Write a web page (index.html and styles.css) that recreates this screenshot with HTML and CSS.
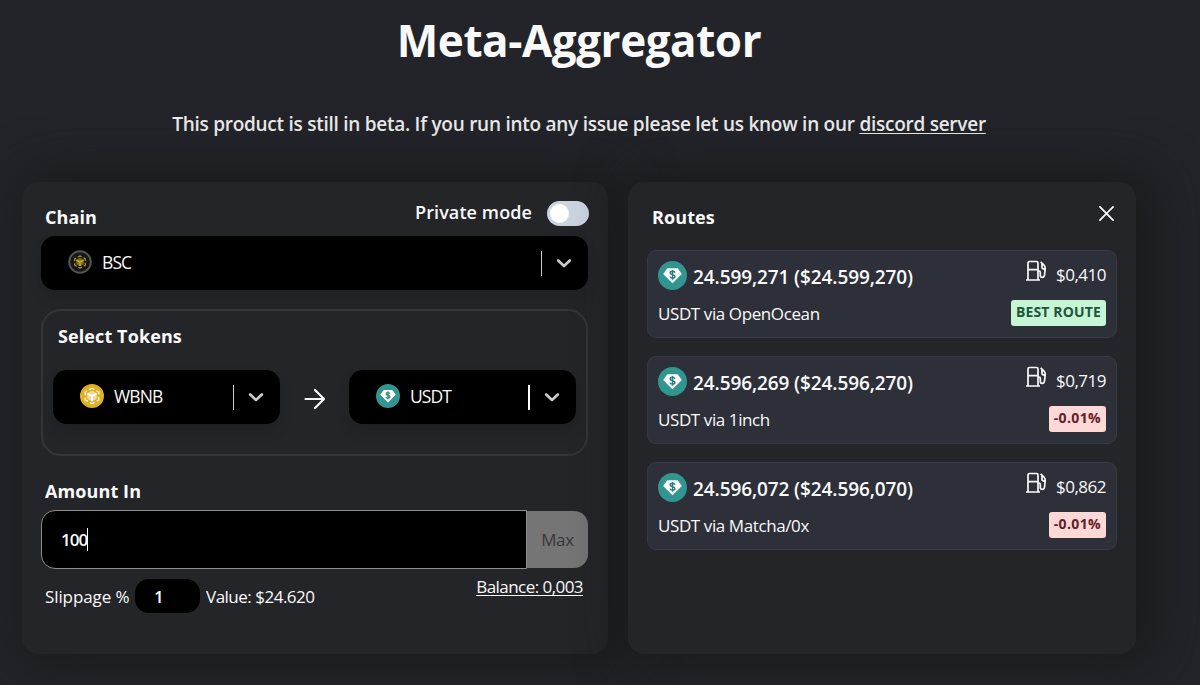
FILE: index.html
```html
<!DOCTYPE html>
<html lang="en">
<head>
    <meta charset="UTF-8">
    <meta name="viewport" content="width=device-width, initial-scale=1.0">
    <title>Meta-Aggregator</title>
    <link rel="stylesheet" href="styles.css">
</head>
<body>
    <!-- shared icons -->
    <svg class="sprite" width="0" height="0">
        <symbol id="chevron" viewBox="0 0 20 20">
            <path d="M4.200 7.500 10 13l5.800-5.500" fill="none" stroke="currentColor" stroke-width="2.600" stroke-linecap="round" stroke-linejoin="round"/>
        </symbol>
        <symbol id="tether" viewBox="0 0 28 28">
            <circle cx="14" cy="14" r="14" fill="#319590"/>
            <path d="M9 7h10l4 5.500L14 21.500l-9-9z" fill="#fff"/>
            <path d="M16.300 11.300c-.3-1-1.100-1.400-2.300-1.400-1.400 0-2.300.6-2.300 1.600 0 2.300 4.700 1.100 4.700 3.400 0 1.100-1 1.700-2.400 1.700-1.300 0-2.200-.5-2.500-1.500M14 8.600v9.400" fill="none" stroke="#2a7f7b" stroke-width="1.400"/>
        </symbol>
        <symbol id="cube" viewBox="0 0 24 24">
            <path d="M12 4.200 18.700 8v8L12 19.800 5.300 16V8z" fill="none" stroke="currentColor" stroke-width="1.300" stroke-dasharray="5.200 2.500" stroke-dashoffset="2.600"/>
            <path d="M12 6.700 16.800 9.300v5.400L12 17.400l-4.800-2.700V9.300z" fill="currentColor" fill-opacity=".55"/>
            <path d="m7.500 9.700 4.500 2.500 4.500-2.500M12 12.200v5" fill="none" stroke="currentColor" stroke-width="1.900"/>
        </symbol>
        <symbol id="gas" viewBox="0 0 22 22">
            <g fill="none" stroke="currentColor" stroke-width="1.700" stroke-linejoin="round">
                <path d="M3 20V3q0-1.500 1.500-1.500h7Q13 1.500 13 3v17M3 9.700h10M1 20h14"/>
                <path d="M13 11h1q1.300 0 1.300 1.500v3.200q0 1.600 1.900 1.600 2.100 0 2.300-2.300l.7-6.200q.2-2.600-1.400-3.900L15.600 1.800M17 3.500v4q0 1.300 2.800 1.700"/>
            </g>
        </symbol>
    </svg>

    <main class="page">
        <h1 class="title">Meta-Aggregator</h1>
        <p class="beta">This product is still in beta. If you run into any issue please let us know in our <a href="#">discord server</a></p>

        <div class="panels">
            <section class="panel swap">
                <div class="chain-head">
                    <h2 class="label">Chain</h2>
                    <div class="private">
                        <span>Private mode</span>
                        <span class="switch"></span>
                    </div>
                </div>
                <div class="select chain">
                    <svg class="token bsc" viewBox="0 0 24 24"><circle cx="12" cy="12" r="10.800" fill="#171717" stroke="#555452" stroke-width="2"/><use href="#cube" x="2.500" y="2.500" width="19" height="19"/></svg>
                    <span class="name">BSC</span>
                    <span class="bar"></span>
                    <svg class="chevron"><use href="#chevron"/></svg>
                </div>

                <div class="tokens">
                    <h2 class="label">Select Tokens</h2>
                    <div class="pair">
                        <div class="select">
                            <svg class="token wbnb" viewBox="0 0 24 24"><circle cx="12" cy="12" r="12" fill="#e3b023"/><use href="#cube" width="24" height="24"/></svg>
                            <span class="name">WBNB</span>
                            <span class="bar"></span>
                            <svg class="chevron"><use href="#chevron"/></svg>
                        </div>
                        <svg class="arrow" viewBox="0 0 22 22"><path d="M1.500 11h18.500M11 2l9 9-9 9" fill="none" stroke="currentColor" stroke-width="2.200" stroke-linecap="round" stroke-linejoin="round"/></svg>
                        <div class="select">
                            <svg class="token"><use href="#tether"/></svg>
                            <span class="name">USDT</span>
                            <span class="bar wide"></span>
                            <svg class="chevron"><use href="#chevron"/></svg>
                        </div>
                    </div>
                </div>

                <h2 class="label amount-label">Amount In</h2>
                <div class="amount">
                    <div class="field"><span class="value">100</span></div>
                    <button class="max">Max</button>
                </div>
                <div class="details">
                    <span class="slip-text">Slippage %</span>
                    <span class="slippage">1</span>
                    <span class="worth">Value: $24.620</span>
                    <a class="balance" href="#">Balance: 0,003</a>
                </div>
            </section>

            <section class="panel routes">
                <div class="routes-head">
                    <h2 class="label">Routes</h2>
                    <svg class="close" viewBox="0 0 16 16"><path d="m1 1 14 14M15 1 1 15" stroke="currentColor" stroke-width="1.900" stroke-linecap="round"/></svg>
                </div>
                <div class="route">
                    <div class="row">
                        <svg class="coin"><use href="#tether"/></svg>
                        <span class="out">24.599,271 ($24.599,270)</span>
                        <svg class="gas"><use href="#gas"/></svg>
                        <span class="fee">$0,410</span>
                    </div>
                    <div class="row second">
                        <span class="via">USDT via OpenOcean</span>
                        <span class="badge best">BEST ROUTE</span>
                    </div>
                </div>
                <div class="route">
                    <div class="row">
                        <svg class="coin"><use href="#tether"/></svg>
                        <span class="out">24.596,269 ($24.596,270)</span>
                        <svg class="gas"><use href="#gas"/></svg>
                        <span class="fee">$0,719</span>
                    </div>
                    <div class="row second">
                        <span class="via">USDT via 1inch</span>
                        <span class="badge">-0.01%</span>
                    </div>
                </div>
                <div class="route">
                    <div class="row">
                        <svg class="coin"><use href="#tether"/></svg>
                        <span class="out">24.596,072 ($24.596,070)</span>
                        <svg class="gas"><use href="#gas"/></svg>
                        <span class="fee">$0,862</span>
                    </div>
                    <div class="row second">
                        <span class="via">USDT via Matcha/0x</span>
                        <span class="badge">-0.01%</span>
                    </div>
                </div>
            </section>
        </div>
    </main>
</body>
</html>
```
FILE: styles.css
```css
* {
    box-sizing: border-box;
}

body {
    margin: 0;
    height: 685px;
    overflow: hidden;
    background: #22242a;
    color: #fafafa;
    font-family: "Open Sans", "Noto Sans", sans-serif;
    font-size: 18px;
    line-height: 24px;
}

h1, h2, p {
    margin: 0;
}

a {
    color: inherit;
    text-underline-offset: 2px;
}

svg {
    flex: none;
}

.sprite {
    display: block;
}

.page {
    width: 1114px;
    margin-left: 22px;
}

.title {
    padding-top: 10px;
    font-size: 44px;
    line-height: 60px;
    font-weight: 700;
    text-align: center;
    letter-spacing: -0.45px;
}

.beta {
    margin-top: 42px;
    margin-bottom: 46px;
    font-size: 19px;
    font-weight: 600;
    text-align: center;
    letter-spacing: -0.26px;
    color: #ececec;
    white-space: nowrap;
}

.panels {
    display: flex;
    gap: 20px;
}

.panel {
    height: 472px;
    border-radius: 16px;
    background: #242529;
    box-shadow: 10px 0 50px 10px rgba(26, 26, 26, 0.9);
}

.label {
    font-size: 18px;
    line-height: 24px;
    font-weight: 700;
    letter-spacing: 0.1px;
}

/* swap form */

.swap {
    width: 586px;
    padding: 18px 20px 0 19px;
}

.chain-head {
    display: flex;
    justify-content: space-between;
    width: 548px;
    height: 36px;
    padding-left: 4px;
}

.chain-head .label {
    padding-top: 5px;
}

.private {
    display: flex;
    gap: 15px;
    font-weight: 600;
    letter-spacing: 0.1px;
}

.switch {
    width: 42px;
    height: 25px;
    margin-top: 1px;
    padding: 3px;
    border-radius: 13px;
    background: #cbd5e0;
}

.switch::before {
    content: "";
    display: block;
    width: 19px;
    height: 19px;
    border-radius: 50%;
    background: #fff;
}

.select {
    display: flex;
    align-items: center;
    width: 227px;
    height: 54px;
    padding: 0 14px 2px 27px;
    border-radius: 14px;
    background: #000;
    box-shadow: 0 8px 14px rgba(0, 0, 0, 0.1);
}

.chain {
    width: 547px;
}

.token {
    width: 24px;
    height: 24px;
}

.bsc {
    color: #cfad2e;
}

.wbnb {
    color: #fff;
}

.name {
    flex: 1;
    margin-left: 10px;
    font-size: 17.5px;
    letter-spacing: -0.9px;
}

.bar {
    width: 1px;
    height: 25px;
    margin-top: 2px;
    background: #ccc;
}

.wide {
    width: 2px;
    background: #fff;
}

.chevron {
    width: 20px;
    height: 20px;
    margin-top: 2px;
    margin-left: 12px;
    color: #ccc;
}

.tokens {
    width: 547px;
    height: 147px;
    margin-top: 19px;
    padding: 13px 10px 0;
    border: 2px solid #34353b;
    border-radius: 20px;
}

.tokens .label {
    padding-left: 5px;
}

.pair {
    display: flex;
    align-items: center;
    justify-content: space-between;
    margin-top: 22px;
}

.arrow {
    width: 22px;
    height: 22px;
    margin-top: 3px;
}

.amount-label {
    margin: 23px 0 7px 4px;
}

.amount {
    display: flex;
    width: 547px;
    height: 59px;
}

.field {
    flex: 1;
    display: flex;
    align-items: center;
    padding-left: 19px;
    border: 1px solid #8d8d8d;
    border-radius: 14px 0 0 14px;
    background: #000;
}

.value {
    border-right: 1px solid #fff;
    font-size: 17px;
    line-height: 23px;
    font-weight: 600;
    letter-spacing: -1px;
}

.max {
    width: 61px;
    margin: 1px 0;
    padding: 0;
    border: 0;
    border-radius: 0 14px 14px 0;
    background: #757575;
    color: #35363a;
    font: inherit;
    font-size: 17px;
    letter-spacing: -0.3px;
}

.details {
    display: flex;
    align-items: center;
    height: 34px;
    margin-top: 10px;
    padding: 2px 5px 0 4px;
    font-size: 17px;
    white-space: nowrap;
}

.slip-text {
    width: 90px;
    letter-spacing: -0.1px;
}

.slippage {
    width: 65px;
    height: 34px;
    margin-top: -2px;
    padding-left: 19px;
    border-radius: 14px;
    background: #000;
    line-height: 36px;
    font-weight: 600;
}

.worth {
    margin-left: 6px;
    letter-spacing: -0.5px;
}

.balance {
    margin-left: auto;
    margin-top: -20px;
    letter-spacing: -0.55px;
}

/* route list */

.routes {
    width: 508px;
    padding: 23px 19px 0;
}

.routes-head {
    display: flex;
    justify-content: space-between;
    height: 45px;
    padding: 0 3px 0 5px;
}

.close {
    width: 15px;
    height: 15px;
    margin-top: 1px;
}

.route {
    height: 88px;
    margin-bottom: 18px;
    padding: 9px 10px 0;
    border: 1px solid #373944;
    border-radius: 9px;
    background: #2d3039;
}

.row {
    display: flex;
    align-items: center;
    height: 31px;
    white-space: nowrap;
}

.coin {
    width: 29px;
    height: 29px;
}

.out {
    flex: 1;
    padding-top: 2px;
    margin-left: 6px;
    font-size: 19px;
    font-weight: 600;
    letter-spacing: -0.1px;
}

.gas {
    width: 22px;
    height: 22px;
    margin-top: -9px;
}

.fee {
    margin-top: -2px;
    margin-left: 9px;
    font-size: 17px;
    letter-spacing: -0.5px;
}

.second {
    justify-content: space-between;
    margin-top: 7px;
}

.via {
    font-size: 17px;
    letter-spacing: -0.4px;
}

.badge {
    height: 26px;
    margin-top: -1px;
    padding: 0 5px;
    border-radius: 3px;
    background: #fed7d7;
    color: #63202a;
    font-size: 14px;
    font-weight: 700;
    letter-spacing: 0.35px;
}

.best {
    background: #c6f6d5;
    color: #22543d;
    letter-spacing: 0.15px;
}
```
